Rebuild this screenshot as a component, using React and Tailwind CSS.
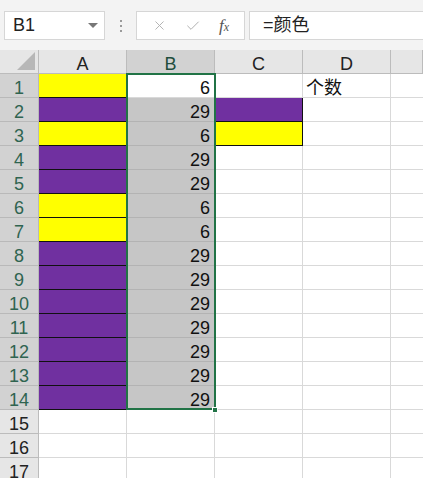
import { X, Check } from "lucide-react";

const cols = ["A", "B", "C", "D", ""];
const aColors = ["y", "p", "y", "p", "p", "y", "y", "p", "p", "p", "p", "p", "p", "p"];
const bValues = [6, 29, 6, 29, 29, 6, 6, 29, 29, 29, 29, 29, 29, 29];

const fill = { y: "bg-[#ffff00]", p: "bg-[#7030a0]" };

function Toolbar() {
  return (
    <div className="h-[50px] bg-[#f3f3f3] flex items-start pt-[11px] pl-[4px] gap-0">
      <div className="w-[101px] h-[29px] bg-white border border-[#d6d6d6] flex items-center justify-between pl-[8px] pr-[4px]">
        <span className="text-[18px] text-[#222]">B1</span>
        <svg width="10" height="6" viewBox="0 0 10 6" className="mt-[1px] mr-[2px]">
          <path d="M0 0 L10 0 L5 5 Z" fill="#777" />
        </svg>
      </div>
      <div className="w-[31px] h-[29px] flex flex-col items-center justify-center gap-[3px]">
        <span className="w-[2px] h-[2px] bg-[#9a9a9a]" />
        <span className="w-[2px] h-[2px] bg-[#9a9a9a]" />
        <span className="w-[2px] h-[2px] bg-[#9a9a9a]" />
      </div>
      <div className="w-[109px] h-[29px] bg-white border border-[#d6d6d6] flex items-center justify-around px-[6px]">
        <X size={15} strokeWidth={1.5} color="#b0b0b0" />
        <Check size={16} strokeWidth={1.5} color="#b0b0b0" />
        <span className="text-[17px] italic text-[#555] font-['Liberation_Serif',serif]">
          f<span className="text-[12px]">x</span>
        </span>
      </div>
      <div className="flex-1 ml-[4px] h-[29px] bg-white border border-[#d6d6d6] border-r-0 flex items-center pl-[13px]">
        <span className="text-[18px] text-[#222] font-['Liberation_Sans','Noto_Sans_CJK_SC',sans-serif]">=颜色</span>
      </div>
    </div>
  );
}

function HeaderRow() {
  return (
    <div className="flex h-[24px]">
      <div className="w-[39px] shrink-0 bg-[#e6e6e6] border-r border-b border-[#bcbcbc] relative">
        <svg width="18" height="18" viewBox="0 0 18 18" className="absolute right-[3px] bottom-[3px]">
          <path d="M18 0 L18 18 L0 18 Z" fill="#b7b7b7" />
        </svg>
      </div>
      {cols.map((c, i) => (
        <div
          key={i}
          className={`${c ? "w-[88px]" : "flex-1"} shrink-0 border-r border-b border-[#bcbcbc] flex items-center justify-center pt-[5px] text-[18px] ${
            c === "B" ? "bg-[#d2d2d2] text-[#1f4e3d]" : "bg-[#e6e6e6] text-[#222]"
          }`}
        >
          {c}
        </div>
      ))}
    </div>
  );
}

function Row({ n }) {
  const sel = n <= 14;
  const a = aColors[n - 1];
  const cFill = n === 2 ? "p" : n === 3 ? "y" : null;
  return (
    <div className="flex h-[24px]">
      <div
        className={`w-[39px] shrink-0 border-r border-b flex items-center justify-center pt-[6px] text-[18px] ${
          sel ? "bg-[#d2d2d2] text-[#2f6450] border-[#b9b9b9]" : "bg-[#e6e6e6] text-[#222] border-[#bcbcbc]"
        }`}
      >
        {n}
      </div>
      <div
        className={`w-[88px] shrink-0 border-r border-b ${
          a ? `${fill[a]} border-[#111]` : "bg-white border-[#d9d9d9]"
        }`}
      />
      <div
        className={`w-[88px] shrink-0 border-r border-b flex items-center justify-end pr-[4px] pt-[6px] text-[18px] text-[#111] ${
          n === 1 ? "bg-white border-[#d9d9d9]" : sel ? "bg-[#c6c6c6] border-[#b3b3b3]" : "bg-white border-[#d9d9d9]"
        }`}
      >
        {bValues[n - 1] ?? ""}
      </div>
      <div
        className={`w-[88px] shrink-0 border-r border-b ${
          cFill ? `${fill[cFill]} border-[#111]` : "bg-white border-[#d9d9d9]"
        }`}
      />
      <div className="w-[88px] shrink-0 border-r border-b border-[#d9d9d9] bg-white flex items-center pl-[3px] pt-[6px] text-[18px] text-[#111] font-['Liberation_Sans','Noto_Sans_CJK_SC',sans-serif]">
        {n === 1 ? "个数" : ""}
      </div>
      <div className="flex-1 border-b border-[#d9d9d9] bg-white" />
    </div>
  );
}

export default function App() {
  const rows = Array.from({ length: 17 }, (_, i) => i + 1);
  return (
    <div className="w-[423px] h-[478px] overflow-hidden bg-white font-['Liberation_Sans','Noto_Sans_CJK_SC',sans-serif]">
      <Toolbar />
      <div className="relative">
        <HeaderRow />
        {rows.map((n) => (
          <Row key={n} n={n} />
        ))}
        <div className="absolute left-[126px] top-[23px] w-[90px] h-[337px] border-2 border-[#217346] pointer-events-none" />
        <div className="absolute left-[212px] top-[357px] w-[6px] h-[6px] bg-[#217346] border border-white" />
      </div>
    </div>
  );
}
